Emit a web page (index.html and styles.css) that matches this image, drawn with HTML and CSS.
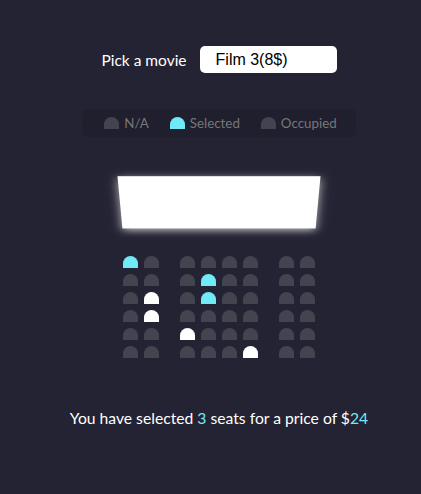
FILE: index.html
```html
<!DOCTYPE html>
<html lang="en">
<head>
<meta charset="UTF-8">
<title>Movie Seat Booking</title>
<link rel="stylesheet" href="styles.css">
</head>
<body>
  <div class="movie-container">
    <label class="movie-label">Pick a movie</label>
    <div class="movie-select">Film 3(8$)</div>
  </div>

  <ul class="showcase">
    <li><div class="seat"></div><small>N/A</small></li>
    <li><div class="seat selected"></div><small>Selected</small></li>
    <li><div class="seat"></div><small>Occupied</small></li>
  </ul>

  <div class="container">
    <div class="screen"></div>

    <div class="row">
      <div class="seat selected"></div><div class="seat gap-right"></div>
      <div class="seat"></div><div class="seat"></div><div class="seat"></div><div class="seat gap-right"></div>
      <div class="seat"></div><div class="seat"></div>
    </div>
    <div class="row">
      <div class="seat"></div><div class="seat gap-right"></div>
      <div class="seat"></div><div class="seat selected"></div><div class="seat"></div><div class="seat gap-right"></div>
      <div class="seat"></div><div class="seat"></div>
    </div>
    <div class="row">
      <div class="seat"></div><div class="seat occupied gap-right"></div>
      <div class="seat"></div><div class="seat selected"></div><div class="seat"></div><div class="seat gap-right"></div>
      <div class="seat"></div><div class="seat"></div>
    </div>
    <div class="row">
      <div class="seat"></div><div class="seat occupied gap-right"></div>
      <div class="seat"></div><div class="seat"></div><div class="seat"></div><div class="seat gap-right"></div>
      <div class="seat"></div><div class="seat"></div>
    </div>
    <div class="row">
      <div class="seat"></div><div class="seat gap-right"></div>
      <div class="seat occupied"></div><div class="seat"></div><div class="seat"></div><div class="seat gap-right"></div>
      <div class="seat"></div><div class="seat"></div>
    </div>
    <div class="row">
      <div class="seat"></div><div class="seat gap-right"></div>
      <div class="seat"></div><div class="seat"></div><div class="seat"></div><div class="seat occupied gap-right"></div>
      <div class="seat"></div><div class="seat"></div>
    </div>
  </div>

  <p class="text">You have selected <span>3</span> seats for a price of $<span>24</span></p>
</body>
</html>
```

FILE: styles.css
```css
* {
  box-sizing: border-box;
}

body {
  background-color: #242333;
  color: #fff;
  display: flex;
  flex-direction: column;
  align-items: center;
  justify-content: flex-start;
  height: 100vh;
  margin: 0;
  padding: 26px 0 0 17px;
  font-family: Lato, "Liberation Sans", sans-serif;
  font-size: 16px;
}

.movie-container {
  margin: 20px 0;
  display: flex;
  align-items: center;
}

.movie-label {
  font-size: 15.5px;
}

.movie-select {
  background-color: #fff;
  color: #000;
  border-radius: 5px;
  font-family: "Liberation Sans", Arial, sans-serif;
  font-size: 16px;
  line-height: 17px;
  margin-left: 13px;
  padding: 5px 16px;
  width: 137px;
}

.showcase {
  background: rgba(0, 0, 0, 0.1);
  padding: 5px 10px;
  border-radius: 5px;
  color: #777;
  list-style-type: none;
  display: flex;
  justify-content: space-between;
  margin: 16px 0;
}

.showcase li {
  display: flex;
  align-items: center;
  justify-content: center;
  margin: 0 9px;
}

.showcase li small {
  margin-left: 2px;
  font-size: 13.33px;
}

.container {
  perspective: 1000px;
  margin-bottom: 43px;
}

.seat {
  background-color: #444451;
  height: 12px;
  width: 15px;
  margin: 3px;
  border-top-left-radius: 10px;
  border-top-right-radius: 10px;
}

.seat.selected {
  background-color: #6feaf6;
}

.seat.occupied {
  background-color: #fff;
}

.seat.gap-right {
  margin-right: 18px;
}

.screen {
  background-color: #fff;
  height: 70px;
  width: 100%;
  margin: 15px 0;
  transform: rotateX(-45deg);
  box-shadow: 0 3px 10px rgba(255, 255, 255, 0.7);
}

.row {
  display: flex;
}

p.text {
  margin: 5px 0;
  font-size: 15.7px;
}

p.text span {
  color: #6feaf6;
}
```
